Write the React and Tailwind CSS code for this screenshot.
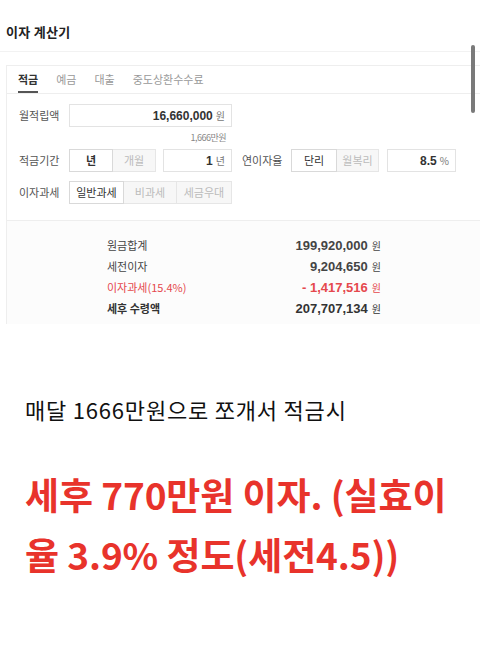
const ko = { fontFamily: '"Noto Sans CJK KR", "Noto Sans", sans-serif' };
const num = { fontFamily: '"Liberation Sans", Arial, sans-serif' };

const Seg = ({ items, widths, active }) => (
  <div className="flex h-[23px]">
    {items.map((t, i) => (
      <div
        key={t}
        style={{ width: widths[i] }}
        className={
          'flex items-center justify-center text-[11px] border ' +
          (i > 0 ? '-ml-px ' : '') +
          (i === active
            ? 'bg-white border-[#d9d9d9] text-[#333] relative z-10'
            : 'bg-[#f7f7f7] border-[#e6e6e6] text-[#bbb]')
        }
      >
        {i === active && t.length === 1 ? <span className="font-bold">{t}</span> : t}
      </div>
    ))}
  </div>
);

const Field = ({ value, unit, w }) => (
  <div
    style={{ width: w }}
    className="h-[23px] border border-[#e3e3e3] bg-white flex items-center justify-end pr-[6px] gap-[3px]"
  >
    <span style={num} className="font-bold text-[12px] text-[#333]">{value}</span>
    <span className="text-[10px] text-[#777]">{unit}</span>
  </div>
);

const Row = ({ label, value, color, bold }) => (
  <div className="h-[21px] flex items-center justify-between">
    <span className={'text-[11px] ' + (bold ? 'font-bold ' : '') + color}>{label}</span>
    <span className={'flex items-center gap-[4px] ' + color}>
      <span style={num} className="font-bold text-[13px]">{value}</span>
      <span className="text-[10px]">원</span>
    </span>
  </div>
);

export default function App() {
  return (
    <div style={ko} className="relative w-[480px] h-[651px] bg-white overflow-hidden">
      {/* header */}
      <div className="h-[52px] border-b border-[#f2f2f2] pl-[6px] pt-[23px]">
        <div className="text-[13px] leading-[18px] font-bold text-[#222] tracking-[0.3px]">이자 계산기</div>
      </div>

      {/* calculator card */}
      <div className="ml-[6px] mt-[13px] w-[490px] border-t border-l border-[#eeeeee]">
        <div className="h-[28px] border-b border-[#eeeeee] pl-[11px] flex gap-[18px] text-[11px]">
          <div className="relative flex items-center font-bold text-[#333]">
            적금
            <div className="absolute left-0 right-0 bottom-0 h-[2px] bg-[#555]" />
          </div>
          <div className="flex items-center text-[#999]">예금</div>
          <div className="flex items-center text-[#999]">대출</div>
          <div className="flex items-center text-[#999]">중도상환수수료</div>
        </div>

        <div className="pl-[12px] pt-[10px] pb-[16px] border-b border-[#eeeeee]">
          <div className="flex items-center">
            <div className="w-[50px] text-[11px] text-[#555]">월적립액</div>
            <Field value="16,660,000" unit="원" w={163} />
          </div>
          <div className="h-[22px] w-[213px] flex items-center justify-end pr-[6px] text-[9px] text-[#888] tracking-[-0.5px]">
            1,666만원
          </div>
          <div className="flex items-center">
            <div className="w-[50px] text-[11px] text-[#555]">적금기간</div>
            <Seg items={['년', '개월']} widths={[44, 44]} active={0} />
            <div className="ml-[7px]">
              <Field value="1" unit="년" w={69} />
            </div>
            <div className="ml-[10px] w-[49px] text-[11px] text-[#555]">연이자율</div>
            <Seg items={['단리', '월복리']} widths={[46, 43]} active={0} />
            <div className="ml-[8px]">
              <Field value="8.5" unit="%" w={69} />
            </div>
          </div>
          <div className="flex items-center mt-[9px]">
            <div className="w-[50px] text-[11px] text-[#555]">이자과세</div>
            <Seg items={['일반과세', '비과세', '세금우대']} widths={[55, 54, 56]} active={0} />
          </div>
        </div>

        <div className="bg-[#fcfcfc] pt-[14px] pb-[5px]">
          <div className="ml-[100px] w-[274px]">
            <Row label="원금합계" value="199,920,000" color="text-[#444]" />
            <Row label="세전이자" value="9,204,650" color="text-[#444]" />
            <Row label="이자과세(15.4%)" value="- 1,417,516" color="text-[#e5484d]" />
            <Row label="세후 수령액" value="207,707,134" color="text-[#333]" bold />
          </div>
        </div>
      </div>

      {/* scrollbar */}
      <div className="absolute left-[471px] top-[45px] w-[4px] h-[68px] rounded-full bg-[#7a7a7a]" />

      {/* caption */}
      <div className="pl-[25px] mt-[70px]">
        <div className="text-[22px] leading-[30px] text-[#111] tracking-[0.8px]">
          매달 1666만원으로 쪼개서 적금시
        </div>
        <div className="mt-[40px] text-[37px] leading-[60px] font-bold text-[#e8332b] whitespace-nowrap tracking-[-0.1px]">
          <div>세후 770만원 이자. (실효이</div>
          <div>율 3.9% 정도(세전4.5))</div>
        </div>
      </div>
    </div>
  );
}
